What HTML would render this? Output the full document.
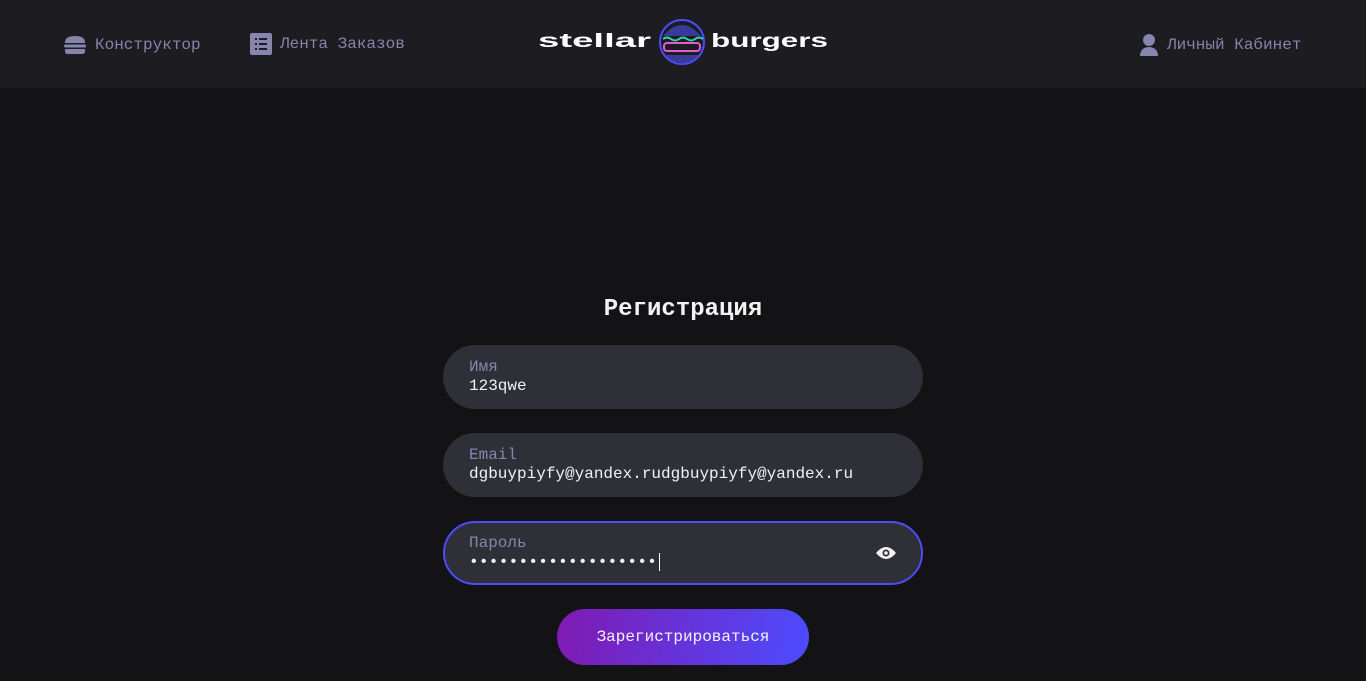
<!DOCTYPE html>
<html><head><meta charset="utf-8"><style>
*{margin:0;padding:0;box-sizing:border-box}
body{width:1366px;height:681px;background:#131316;font-family:"Liberation Mono",monospace;color:#f2f2f3;overflow:hidden;position:relative}
header{position:absolute;left:0;top:0;width:1366px;height:88px;background:#1c1c21}
.nav{position:absolute;top:33px;font-size:16px;color:#8585ad;line-height:22px;display:flex;align-items:center}
.nav svg{margin-right:8px}
.logo{position:absolute;left:537px;top:18px;width:292px;height:48px}
h1{position:absolute;top:295px;left:0;width:1366px;text-align:center;font-size:24px;font-weight:bold;line-height:30px}
.inp{position:absolute;left:443px;width:480px;height:64px;border-radius:40px;background:#2f2f37}
.inp .l{position:absolute;left:26px;top:12px;font-size:16px;color:#8585ad;line-height:20px}
.inp .v{position:absolute;left:26px;top:31px;font-size:16px;color:#f2f2f3;line-height:20px}
.btn{position:absolute;left:557px;top:609px;width:252px;height:56px;border-radius:28px;background:linear-gradient(100deg,#801ab2,#4c4cff);font-size:16px;text-align:center;line-height:56px;color:#f2f2f3}
</style></head><body>
<header>
<div class="nav" style="left:63px"><svg width="24" height="24" viewBox="0 0 24 24" fill="#8585ad"><path d="M2 9C2 5 6 3 12 3s10 2 10 6v1H2z"/><rect x="1" y="11.5" width="22" height="3" rx="1.5"/><path d="M2 16h20v2c0 2-1 3-3 3H5c-2 0-3-1-3-3z"/></svg>Конструктор</div>
<div class="nav" style="left:250px"><svg width="22" height="22" viewBox="0 0 22 22"><rect width="22" height="22" rx="2" fill="#8585ad"/><g fill="#1c1c21"><rect x="5" y="5" width="2" height="2"/><rect x="9" y="5" width="8" height="2"/><rect x="5" y="10" width="2" height="2"/><rect x="9" y="10" width="8" height="2"/><rect x="5" y="15" width="2" height="2"/><rect x="9" y="15" width="8" height="2"/></g></svg>Лента Заказов</div>
<svg class="logo" width="292" height="48" viewBox="0 0 292 48">
<text x="1" y="29" font-family="Liberation Sans,sans-serif" font-size="19" font-weight="bold" fill="#fff" textLength="113" lengthAdjust="spacingAndGlyphs">stellar</text>
<g transform="translate(122,0)"><circle cx="23" cy="24" r="22" fill="#1c1c21" stroke="#4c4cff" stroke-width="2"/><path d="M4 18Q23 -4 42 18z" fill="#3a3a9a"/><path d="M4 21q4 -3 8 0t8 0t8 0t8 0t8 0" stroke="#2ad8a8" fill="none" stroke-width="2"/><rect x="5" y="25" width="36" height="8" rx="3" fill="none" stroke="#e25bd4" stroke-width="2"/><path d="M6 37Q23 54 40 37z" fill="#3a3a9a"/></g>
<text x="174" y="29" font-family="Liberation Sans,sans-serif" font-size="19" font-weight="bold" fill="#fff" textLength="117" lengthAdjust="spacingAndGlyphs">burgers</text>
</svg>
<div class="nav" style="left:1139px"><svg width="20" height="24" viewBox="0 0 20 24" fill="#8585ad"><circle cx="10" cy="7" r="6"/><path d="M1 23c0-6 4-9 9-9s9 3 9 9z"/></svg>Личный Кабинет</div>
</header>
<h1>Регистрация</h1>
<div class="inp" style="top:345px"><div class="l">Имя</div><div class="v">123qwe</div></div>
<div class="inp" style="top:433px"><div class="l">Email</div><div class="v">dgbuypiyfy@yandex.rudgbuypiyfy@yandex.ru</div></div>
<div class="inp" style="top:521px;border:2px solid #4c4cff"><div class="l" style="left:24px;top:10px">Пароль</div><div class="v" style="left:24px;top:29px;letter-spacing:0.3px">•••••••••••••••••••<span style="border-left:1px solid #fff;margin-left:2px"> </span></div>
<svg style="position:absolute;left:430px;top:21px" width="22" height="18" viewBox="0 0 22 18"><path d="M1 9Q11 -3 21 9Q11 21 1 9z" fill="#f2f2f3"/><circle cx="11" cy="9" r="3.5" fill="#2f2f37"/><circle cx="11" cy="9" r="1.8" fill="#f2f2f3"/></svg></div>
<div class="btn">Зарегистрироваться</div>
</body></html>
